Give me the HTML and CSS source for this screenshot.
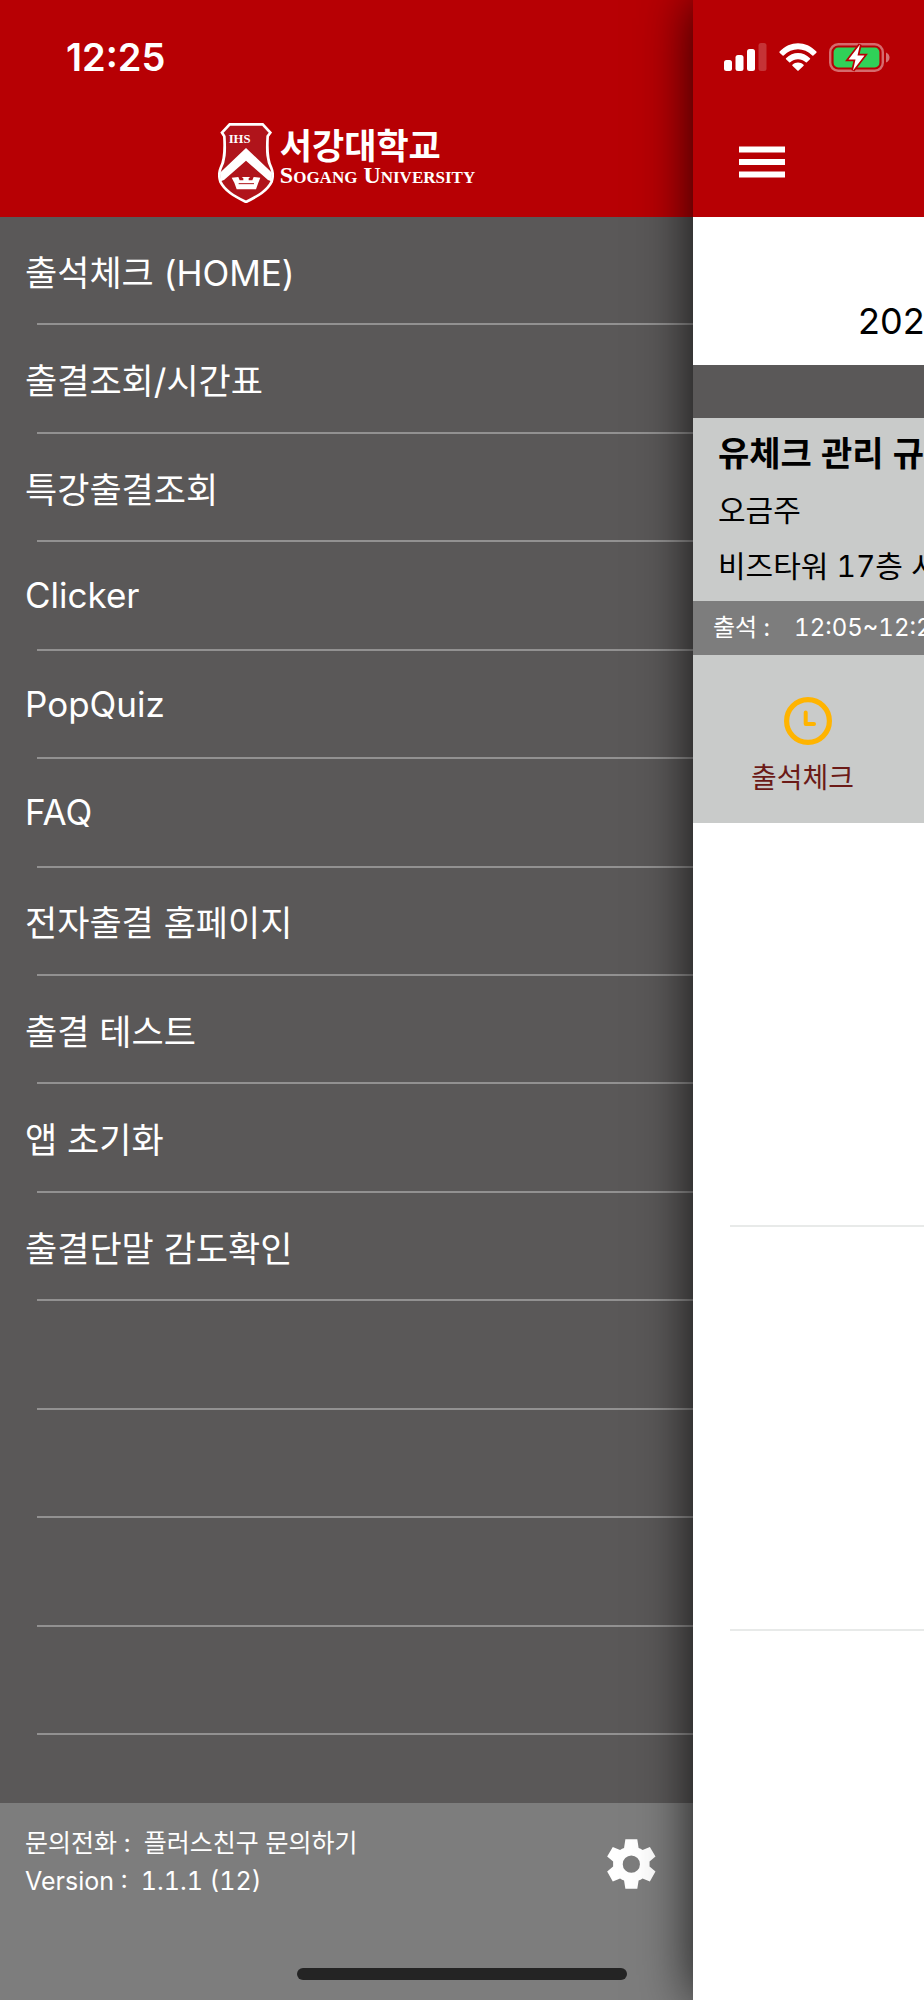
FILE: index.html
```html
<!DOCTYPE html>
<html lang="ko">

<head>
    <meta charset="UTF-8">
    <meta name="viewport" content="width=device-width, initial-scale=1.0">
    <title>서강대학교 출석체크</title>
    <link rel="stylesheet" href="styles.css">
</head>

<body>
    <div class="app">

        <aside class="drawer">
            <header class="header">
                <div class="status">
                    <span class="clock">12:25</span>
                </div>
                <div class="logo">
                    <svg class="shield" viewBox="30 37 168 240" fill="none" xmlns="http://www.w3.org/2000/svg">
                        <path
                            d="M65 41H164L187 66L179 77C176 125 178 150 190 172C196 186 195 200 191 213C178 240 150 256 114 274C78 256 50 240 37 213C33 200 32 186 38 172C50 150 52 125 49 77L42 66Z"
                            fill="#B0141B" stroke="#fff" stroke-width="8" />
                        <path d="M114 112L192 186L190 212L180 208L114 150L48 208L38 212L36 186Z" fill="#fff" />
                        <path
                            d="M71 201L91 199L95 209H106V203L101 199H127L122 203V209H133L137 199L157 201L151 216L144 236H86L79 216Z"
                            fill="#fff" />
                        <path d="M92 219H138" stroke="#B0141B" stroke-width="3" />
                        <text class="shield-text" x="62" y="97">IHS</text>
                    </svg>
                    <div class="logo-name">
                        <span class="logo-ko">서강대학교</span>
                        <span class="logo-en">Sogang University</span>
                    </div>
                </div>
            </header>

            <nav class="menu">
                <ul>
                    <li><a href="#">출석체크 (HOME)</a></li>
                    <li><a href="#">출결조회/시간표</a></li>
                    <li><a href="#">특강출결조회</a></li>
                    <li><a href="#">Clicker</a></li>
                    <li><a href="#">PopQuiz</a></li>
                    <li><a href="#">FAQ</a></li>
                    <li><a href="#">전자출결 홈페이지</a></li>
                    <li><a href="#">출결 테스트</a></li>
                    <li><a href="#">앱 초기화</a></li>
                    <li><a href="#">출결단말 감도확인</a></li>
                    <li></li>
                    <li></li>
                    <li></li>
                    <li></li>
                </ul>
            </nav>

            <footer class="footer">
                <div class="info">
                    <p>문의전화 :&nbsp; 플러스친구 문의하기</p>
                    <p>Version :&nbsp; 1.1.1 (12)</p>
                </div>
                <button class="settings" type="button" aria-label="설정">
                    <svg width="49" height="50" viewBox="142 177 147 151" xmlns="http://www.w3.org/2000/svg">
                        <path fill="#fff" fill-rule="evenodd"
                            d="M197 178H233L237 204Q243 206 249 210L271 201L288 230L270 245V260L288 275L271 305L249 296Q243 300 237 302L233 327H197L193 302Q187 300 181 296L159 305L142 275L160 260V245L142 230L159 201L181 210Q187 206 193 204ZM215 227A26 26 0 1 0 215 279A26 26 0 1 0 215 227Z" />
                    </svg>
                </button>
            </footer>
        </aside>

        <main class="content">
            <header class="header">
                <div class="status status-icons">
                    <!-- signal -->
                    <svg width="43" height="28" viewBox="0 0 43 28" xmlns="http://www.w3.org/2000/svg">
                        <rect x="0" y="17" width="8" height="11" rx="2.5" fill="#fff" />
                        <rect x="11.5" y="12" width="8" height="16" rx="2.5" fill="#fff" />
                        <rect x="23" y="6" width="8" height="22" rx="2.5" fill="#fff" />
                        <rect x="34.5" y="0" width="8" height="28" rx="2.5" fill="#fff" fill-opacity="0.2" />
                    </svg>
                    <!-- wifi -->
                    <svg width="38" height="28" viewBox="0 0 38 28" xmlns="http://www.w3.org/2000/svg">
                        <path fill="#fff"
                            d="M0.6 8.6C11 -2.6 27 -2.6 37.4 8.6Q37.8 9.2 37.4 9.7L34.4 12.6Q33.8 13 33.3 12.5C25 4.3 13 4.3 4.7 12.5Q4.2 13 3.6 12.6L0.6 9.7Q0.2 9.2 0.6 8.6Z" />
                        <path fill="#fff"
                            d="M7 15.2C14 8.2 24 8.2 31 15.2Q31.4 15.8 31 16.2L27.8 19.3Q27.3 19.7 26.8 19.3C22.3 15.3 15.7 15.3 11.2 19.3Q10.7 19.7 10.2 19.3L7 16.2Q6.6 15.8 7 15.2Z" />
                        <path fill="#fff"
                            d="M13.4 21.8C16.5 18.8 21.5 18.8 24.6 21.8Q25 22.3 24.6 22.8L19.6 27.6Q19 28.2 18.4 27.6L13.4 22.8Q13 22.3 13.4 21.8Z" />
                    </svg>
                    <!-- battery -->
                    <svg width="61" height="29" viewBox="0 0 61 29" xmlns="http://www.w3.org/2000/svg">
                        <rect x="1.2" y="1.2" width="52.6" height="26.6" rx="8" fill="none" stroke="#fff"
                            stroke-opacity="0.42" stroke-width="2.4" />
                        <path d="M57 9.5Q60.5 11 60.5 14.5T57 19.5Z" fill="#fff" fill-opacity="0.45" />
                        <rect x="4.6" y="4.6" width="45.8" height="19.8" rx="4.5" fill="#30D158" />
                        <path d="M31 1.5L19.5 16.5H26.5L24 27.5L35.5 12.5H28.5Z" fill="#fff" stroke="#B70004"
                            stroke-width="3.4" stroke-linejoin="miter" paint-order="stroke" />
                    </svg>
                </div>
                <button class="burger" type="button" aria-label="메뉴">
                    <svg width="46" height="32" viewBox="0 0 46 32" xmlns="http://www.w3.org/2000/svg">
                        <path d="M0 3.5H46M0 16H46M0 28.5H46" stroke="#fff" stroke-width="6.2" />
                    </svg>
                </button>
            </header>

            <div class="date">202</div>
            <div class="strip"></div>

            <section class="lecture">
                <h2>유체크 관리 규</h2>
                <p>오금주</p>
                <p>비즈타워 17층 시</p>
            </section>

            <div class="time">
                <span>출석 :</span>
                <span>12:05~12:2</span>
            </div>

            <div class="actions">
                <button class="check" type="button">
                    <svg width="48" height="48" viewBox="0 0 48 48" fill="none" xmlns="http://www.w3.org/2000/svg">
                        <circle cx="24" cy="24" r="21.4" stroke="#FFB400" stroke-width="5.2" />
                        <path d="M21.7 15.5V27H30" stroke="#FFB400" stroke-width="4" stroke-linecap="round"
                            stroke-linejoin="round" />
                    </svg>
                    <span class="check-label">출석체크</span>
                </button>
            </div>

            <div class="empty-row"></div>
            <div class="empty-row"></div>
        </main>

    </div>
    <div class="home-bar"></div>
</body>

</html>
```
FILE: styles.css
```css
* {
    box-sizing: border-box;
    font-family: Inter, "Noto Sans CJK KR", sans-serif;
}

body {
    margin: 0;
    background-color: white;
}

h2,
p,
ul {
    margin: 0;
    padding: 0;
}

button {
    background: none;
    border: none;
    padding: 0;
}

svg {
    display: block;
    flex-shrink: 0;
}

.app {
    display: flex;
    min-height: 100vh;
    overflow: hidden;
}

.header {
    background-color: #b70004;
    height: 217px;
}

.status {
    display: flex;
    align-items: center;
    height: 114px;
    padding-left: 66px;
    color: white;
}

.clock {
    font-size: 38px;
    font-weight: 600;
}

/* drawer */

.drawer {
    display: flex;
    flex-direction: column;
    width: 75%;
    background-color: #5a5858;
}

.logo {
    display: flex;
    justify-content: center;
    gap: 6px;
    padding-top: 9px;
    color: white;
}

.shield {
    width: 56px;
    height: 80px;
}

.shield-text {
    font-family: "Liberation Serif", serif;
    font-size: 38px;
    font-weight: 700;
    fill: white;
}

.logo-name {
    display: flex;
    flex-direction: column;
    padding-top: 6px;
}

.logo-ko {
    font-size: 35px;
    font-weight: 700;
    line-height: 34px;
}

.logo-en {
    font-family: "Liberation Serif", serif;
    font-size: 24px;
    font-weight: 700;
    font-variant: small-caps;
    line-height: 24px;
}

.menu {
    display: flex;
    flex: 1;
    padding-bottom: 68px;
}

.menu ul {
    display: grid;
    flex: 1;
    grid-auto-rows: 1fr;
    list-style: none;
}

.menu li {
    display: flex;
    flex-direction: column;
    min-height: 80px;
}

.menu li::after {
    content: "";
    height: 2px;
    margin-top: auto;
    margin-left: 37px;
    background-color: #929191;
}

.menu a {
    display: flex;
    flex: 1;
    align-items: center;
    padding-left: 25px;
    color: white;
    font-size: 35px;
    text-decoration: none;
}

.footer {
    display: flex;
    justify-content: space-between;
    height: 197px;
    padding: 21px 37px 0 25px;
    background-color: #7d7d7d;
}

.info {
    color: white;
    font-size: 25px;
    font-variant-numeric: tabular-nums;
    line-height: 38px;
}

.settings {
    align-self: flex-start;
    padding-top: 15px;
}

/* page under the drawer */

.content {
    position: relative;
    width: 25%;
    background-color: white;
    box-shadow: 0 0 50px rgba(0, 0, 0, 0.8);
    white-space: nowrap;
}

.content > * {
    overflow: hidden;
}

.status-icons {
    gap: 12px;
    padding-left: 31px;
}

.burger {
    padding: 32px 46px;
}

.date {
    height: 148px;
    padding: 80px 0 0 165px;
    font-size: 36px;
    line-height: 48px;
}

.strip {
    height: 53px;
    background-color: #5a5858;
}

.lecture {
    padding: 8px 0 7px 25px;
    background-color: #c9cbca;
    font-size: 30px;
    font-variant-numeric: tabular-nums;
    line-height: 56px;
}

.lecture h2 {
    font-size: 34px;
    font-weight: 700;
}

.time {
    display: flex;
    gap: 24px;
    padding-left: 20px;
    background-color: #7d7d7d;
    color: white;
    font-size: 24px;
    font-variant-numeric: tabular-nums;
    line-height: 54px;
}

.actions {
    height: 168px;
    padding: 42px 0 0 58px;
    background-color: #c9cbca;
}

.check {
    display: flex;
    flex-direction: column;
    align-items: center;
    gap: 12px;
    color: #6b1a17;
    font-size: 28px;
    line-height: 42px;
}

.check-label {
    padding-right: 10px;
}

.empty-row {
    height: 404px;
    margin-left: 37px;
    border-bottom: 2px solid #e8eae9;
}

.home-bar {
    position: fixed;
    bottom: 20px;
    left: 50%;
    width: 330px;
    height: 12px;
    margin-left: -165px;
    border-radius: 6px;
    background-color: #242424;
}
```
